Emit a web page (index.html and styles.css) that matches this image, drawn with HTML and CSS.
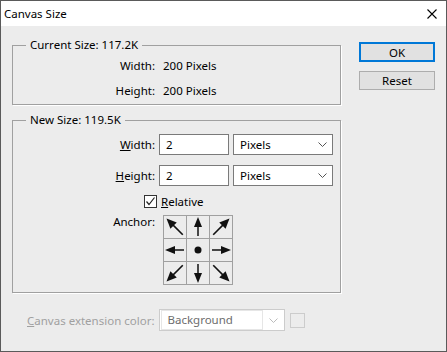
FILE: index.html
```html
<!DOCTYPE html>
<html lang="en">
<head>
    <meta charset="UTF-8">
    <title>Canvas Size</title>
    <link rel="stylesheet" href="styles.css">
</head>
<body>

<div class="window">
    <div class="titlebar">
        <span class="title">Canvas Size</span>
        <svg class="close" width="10" height="10" viewBox="0 0 10 10">
            <path d="M0.5 0.5 L9.5 9.5 M9.5 0.5 L0.5 9.5" stroke="#000" stroke-width="1.1" fill="none"/>
        </svg>
    </div>

    <div class="content">
        <div class="left">
            <fieldset class="group current">
                <legend>Current Size: 117.2K</legend>
                <div class="info">
                    <span class="label">Width:</span>
                    <span>200 Pixels</span>
                    <span class="label">Height:</span>
                    <span>200 Pixels</span>
                </div>
            </fieldset>

            <fieldset class="group newsize">
                <legend>New Size: 119.5K</legend>
                <div class="field-row">
                    <span class="label"><u>W</u>idth:</span>
                    <div class="textbox">2</div>
                    <div class="dropdown">
                        <span>Pixels</span>
                        <svg class="chev" width="9" height="5" viewBox="0 0 9 5"><path d="M0.5 0.5 L4.5 4.5 L8.5 0.5" stroke="#555" fill="none"/></svg>
                    </div>
                </div>
                <div class="field-row">
                    <span class="label"><u>H</u>eight:</span>
                    <div class="textbox">2</div>
                    <div class="dropdown">
                        <span>Pixels</span>
                        <svg class="chev" width="9" height="5" viewBox="0 0 9 5"><path d="M0.5 0.5 L4.5 4.5 L8.5 0.5" stroke="#555" fill="none"/></svg>
                    </div>
                </div>
                <div class="check-row">
                    <span class="checkbox">
                        <svg width="11" height="11" viewBox="0 0 11 11"><path d="M1.5 5.5 L4 8.5 L9.5 1.5" stroke="#222" stroke-width="1.2" fill="none"/></svg>
                    </span>
                    <span><u>R</u>elative</span>
                </div>
                <div class="anchor-row">
                    <span class="label">Anchor:</span>
                    <div class="anchor">
                        <div class="cell"><svg class="arrow" viewBox="0 0 22 22"><g transform="rotate(-135 11 11)"><path d="M0 11 H15" stroke="#111" stroke-width="1.6"/><path d="M13 6.5 L23 11 L13 15.5 Z" fill="#111"/></g></svg></div>
                        <div class="cell"><svg class="arrow" viewBox="0 0 22 22"><g transform="rotate(-90 11 11)"><path d="M2 11 H13" stroke="#111" stroke-width="1.5"/><path d="M11 7 L21 11 L11 15 Z" fill="#111"/></g></svg></div>
                        <div class="cell"><svg class="arrow" viewBox="0 0 22 22"><g transform="rotate(-45 11 11)"><path d="M0 11 H15" stroke="#111" stroke-width="1.6"/><path d="M13 6.5 L23 11 L13 15.5 Z" fill="#111"/></g></svg></div>
                        <div class="cell"><svg class="arrow" viewBox="0 0 22 22"><g transform="rotate(180 11 11)"><path d="M2 11 H13" stroke="#111" stroke-width="1.5"/><path d="M11 7 L21 11 L11 15 Z" fill="#111"/></g></svg></div>
                        <div class="cell"><svg class="arrow" viewBox="0 0 22 22"><circle cx="11" cy="11" r="3.5" fill="#111"/></svg></div>
                        <div class="cell"><svg class="arrow" viewBox="0 0 22 22"><path d="M2 11 H13" stroke="#111" stroke-width="1.5"/><path d="M11 7 L21 11 L11 15 Z" fill="#111"/></svg></div>
                        <div class="cell"><svg class="arrow" viewBox="0 0 22 22"><g transform="rotate(135 11 11)"><path d="M0 11 H15" stroke="#111" stroke-width="1.6"/><path d="M13 6.5 L23 11 L13 15.5 Z" fill="#111"/></g></svg></div>
                        <div class="cell"><svg class="arrow" viewBox="0 0 22 22"><g transform="rotate(90 11 11)"><path d="M2 11 H13" stroke="#111" stroke-width="1.5"/><path d="M11 7 L21 11 L11 15 Z" fill="#111"/></g></svg></div>
                        <div class="cell"><svg class="arrow" viewBox="0 0 22 22"><g transform="rotate(45 11 11)"><path d="M0 11 H15" stroke="#111" stroke-width="1.6"/><path d="M13 6.5 L23 11 L13 15.5 Z" fill="#111"/></g></svg></div>
                    </div>
                </div>
            </fieldset>
        </div>

        <div class="buttons">
            <button class="btn default">OK</button>
            <button class="btn">Reset</button>
        </div>
    </div>

    <div class="extension">
        <span class="label disabled"><u>C</u>anvas extension color:</span>
        <div class="dropdown off">
            <span class="inner">Background</span>
            <svg class="chev" width="9" height="5" viewBox="0 0 9 5"><path d="M0.5 0.5 L4.5 4.5 L8.5 0.5" stroke="#bbb" fill="none"/></svg>
        </div>
        <span class="swatch"></span>
    </div>
</div>

</body>
</html>
```

FILE: styles.css
```css
body {
    margin: 0;
    font-family: "Noto Sans", sans-serif;
    font-size: 11.5px;
    color: #000;
}

.window {
    width: 447px;
    height: 352px;
    box-sizing: border-box;
    border: 1px solid #5a5a5a;
    background-color: #ececec;
    display: flex;
    flex-direction: column;
}

.titlebar {
    height: 25px;
    background-color: #fff;
    display: flex;
    align-items: center;
    justify-content: space-between;
    padding: 0 9px 0 3px;
}

.title {
    font-size: 11.5px;
}

.content {
    display: flex;
    padding-left: 11px;
}

.left {
    width: 329px;
}

/* group boxes */
.group {
    margin: 0;
    padding: 0;
    border: 1px solid #a0a0a0;
    box-shadow: 1px 1px 0 #fff;
}

.group legend {
    margin-left: 13px;
    padding: 0 4px;
    line-height: 16px;
}

.current {
    margin-top: 11px;
    padding-bottom: 1px;
}

.newsize {
    margin-top: 7px;
    padding: 6px 0 7px;
}

.info {
    display: grid;
    grid-template-columns: 142px auto;
    column-gap: 8px;
    grid-auto-rows: 25px;
    align-items: center;
}

.label {
    text-align: right;
}

.field-row {
    display: flex;
    align-items: center;
    gap: 4px;
    margin-bottom: 10px;
}

.field-row .label {
    width: 142px;
}

.textbox {
    width: 70px;
    height: 21px;
    box-sizing: border-box;
    border: 1px solid #7a7a7a;
    background-color: #fff;
    padding-left: 6px;
    line-height: 19px;
}

.dropdown {
    width: 100px;
    height: 21px;
    box-sizing: border-box;
    border: 1px solid #7a7a7a;
    background-color: #fff;
    display: flex;
    align-items: center;
    justify-content: space-between;
    padding: 0 5px 0 6px;
}

.check-row {
    display: flex;
    align-items: center;
    gap: 4px;
    padding-left: 131px;
    margin-top: -2px;
    height: 14px;
}

.checkbox {
    width: 13px;
    height: 13px;
    box-sizing: border-box;
    border: 1px solid #333;
    background-color: #fff;
    display: flex;
    align-items: center;
    justify-content: center;
}

.anchor-row {
    display: flex;
    gap: 8px;
    margin-top: 7px;
}

.anchor-row .label {
    width: 142px;
    line-height: 14px;
}

.anchor {
    display: grid;
    grid-template-columns: repeat(3, 22px);
    grid-auto-rows: 22px;
    gap: 1px;
    padding: 1px;
    background-color: #a0a0a0;
}

.cell {
    background-color: #ececec;
}

.arrow {
    width: 22px;
    height: 22px;
    display: block;
}

/* dialog buttons */
.buttons {
    display: flex;
    flex-direction: column;
    gap: 9px;
    margin: 16px 0 0 18px;
}

.btn {
    width: 76px;
    height: 19px;
    box-sizing: border-box;
    padding: 0;
    border: 1px solid #adadad;
    background-color: #e1e1e1;
    font-family: "Noto Sans", sans-serif;
    font-size: 11.5px;
    line-height: 15px;
}

.btn.default {
    border: 2px solid #0078d7;
    height: 20px;
}

/* bottom row */
.extension {
    display: flex;
    align-items: center;
    margin-top: 16px;
    padding-left: 26px;
    gap: 5px;
}

.disabled {
    color: #a0a0a0;
}

.dropdown.off {
    width: 126px;
    height: 22px;
    border-color: #ccc;
    padding: 1px 6px 1px 1px;
}

.dropdown.off .inner {
    flex: 1;
    height: 18px;
    border: 1px solid #e6e6e6;
    padding-left: 5px;
    margin-right: 6px;
    line-height: 18px;
    color: #6d6d6d;
}

.swatch {
    width: 15px;
    height: 15px;
    box-sizing: border-box;
    border: 1px solid #ccc;
}
```
